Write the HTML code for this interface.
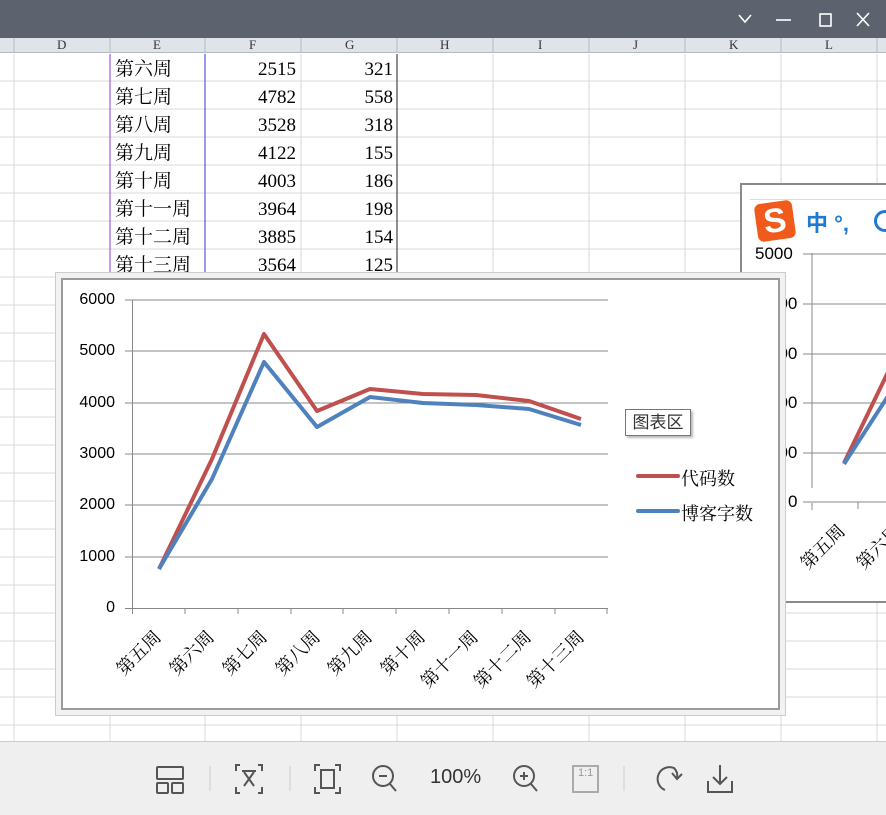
<!DOCTYPE html><html><head><meta charset="utf-8"><style>
*{margin:0;padding:0;box-sizing:border-box}
body{width:886px;height:815px;overflow:hidden;background:#fff;position:relative;font-family:"Liberation Serif","Noto Serif CJK SC",serif}
.abs{position:absolute}
.title{left:0;top:0;width:886px;height:38px;background:#5d636e}
.hdr{left:0;top:38px;width:886px;height:15px;background:#dfe3ea;border-bottom:1px solid #b5b9c0;font-size:13px;color:#333;line-height:13px;overflow:hidden}
.cell{font-size:19px;color:#000}
.sans{font-family:"Liberation Sans","Noto Sans CJK SC",sans-serif}
.lab{position:absolute;top:624px;width:90px;text-align:right;transform:rotate(-45deg);transform-origin:right top;font-size:18px}
</style></head><body>
<div class="abs title">
<svg class="abs" style="left:0;top:0" width="886" height="38" stroke="#fff" stroke-width="1.6" fill="none">
<path d="M739 15 L745 22 L751 15"/><path d="M776 20 H791"/><rect x="820" y="14" width="11" height="12"/><path d="M857 13 L869 26 M869 13 L857 26"/></svg></div>
<div class="abs hdr">
<span class="abs" style="left:57px;top:0">D</span><span class="abs" style="left:153px">E</span><span class="abs" style="left:249px">F</span><span class="abs" style="left:345px">G</span><span class="abs" style="left:440px">H</span><span class="abs" style="left:538px">I</span><span class="abs" style="left:633px">J</span><span class="abs" style="left:729px">K</span><span class="abs" style="left:825px">L</span>
<svg class="abs" style="left:0;top:0" width="886" height="15" stroke="#b5b9c0"><path d="M14 0V15M110 0V15M205 0V15M301 0V15M397 0V15M493 0V15M589 0V15M685 0V15M781 0V15M877 0V15"/></svg></div>
<svg class="abs" style="left:0;top:54px" width="886" height="690" stroke="#d9d9d9" stroke-width="1">
<path d="M0 27H886M0 55H886M0 83H886M0 111H886M0 139H886M0 167H886M0 195H886M0 223H886M0 251H886M0 279H886M0 307H886M0 335H886M0 363H886M0 391H886M0 419H886M0 447H886M0 475H886M0 503H886M0 531H886M0 559H886M0 587H886M0 615H886M0 643H886M0 671H886"/>
<path d="M14 0V690M493 0V690M589 0V690M685 0V690M781 0V690M877 0V690M205 0V690M301 0V690"/>
<path d="M110 0V220" stroke="#8a3fd0"/><path d="M205 0V220" stroke="#3333dd"/><path d="M397 0V220" stroke="#222"/><path d="M110 220V690M397 220V690"/>
</svg>
<div class="abs cell" style="left:115px;top:56px;line-height:28px">第六周<br>第七周<br>第八周<br>第九周<br>第十周<br>第十一周<br>第十二周<br>第十三周</div>
<div class="abs cell" style="left:205px;width:91px;text-align:right;top:56px;line-height:28px">2515<br>4782<br>3528<br>4122<br>4003<br>3964<br>3885<br>3564</div>
<div class="abs cell" style="left:301px;width:92px;text-align:right;top:56px;line-height:28px">321<br>558<br>318<br>155<br>186<br>198<br>154<br>125</div>

<!-- background chart -->
<div class="abs" style="left:740px;top:183px;width:150px;height:420px;background:#fff;border:2px solid #8a8a8a;overflow:hidden">
<svg class="abs" style="left:-2px;top:-2px" width="150" height="420">
<g stroke="#888"><path d="M72 70V305M72 320V327"/><path d="M63 71H150M63 121H150M63 171H150M63 220H150M63 270H150M63 319H150"/><path d="M63 319H150M118 319V326"/></g>
<path d="M104 280 L150 185" stroke="#c0504d" stroke-width="4"/><path d="M104 281 L150 210" stroke="#4f81bd" stroke-width="4"/>
</svg>
<div class="abs sans" style="left:13px;top:59px;font-size:17px">5000</div>
<div class="abs sans" style="left:27px;top:109px;font-size:17px">000</div>
<div class="abs sans" style="left:27px;top:159px;font-size:17px">000</div>
<div class="abs sans" style="left:27px;top:208px;font-size:17px">000</div>
<div class="abs sans" style="left:27px;top:258px;font-size:17px">000</div>
<div class="abs sans" style="left:46px;top:307px;font-size:17px">0</div>
<div class="abs" style="left:0px;top:333px;font-size:18px;transform:rotate(-45deg);transform-origin:right top;width:90px;text-align:right">第五周</div>
<div class="abs" style="left:56px;top:333px;font-size:18px;transform:rotate(-45deg);transform-origin:right top;width:90px;text-align:right">第六周</div>
</div>
<div class="abs" style="left:750px;top:199px;width:136px;height:42px;background:#fff;border-top:1px solid #ddd">
<div class="abs" style="left:6px;top:2px;width:38px;height:38px;background:#f05a1a;border-radius:6px;transform:rotate(-8deg);color:#fff;font:bold 34px/38px 'Liberation Sans',sans-serif;text-align:center">S</div>
<div class="abs sans" style="left:56px;top:6px;font-size:22px;color:#1f7ad1;font-weight:bold">中 °,</div>
<div class="abs" style="left:124px;top:10px;width:22px;height:22px;border:3px solid #1f7ad1;border-radius:50%"></div>
</div>

<!-- main chart -->
<div class="abs" style="left:55px;top:272px;width:731px;height:444px;background:#f2f2f2;border:1px solid #ccc"></div>
<div class="abs" style="left:61px;top:278px;width:719px;height:432px;background:#fff;border:2px solid #9a9a9a"></div>
<svg class="abs" style="left:0;top:0" width="886" height="815">
<g stroke="#888" stroke-width="1"><path d="M125 300H608M125 351H608M125 403H608M125 454H608M125 505H608M125 557H608"/><path d="M125 608.5H608M132.5 300V614"/>
<path d="M185 608V614M238 608V614M291 608V614M343 608V614M396 608V614M449 608V614M502 608V614M555 608V614M607 608V614"/></g>
<polyline fill="none" stroke="#c0504d" stroke-width="4" stroke-linejoin="round" points="159,569 212,459 264,334 317,411 370,389 423,394 476,395 529,401 581,419"/>
<polyline fill="none" stroke="#4f81bd" stroke-width="4" stroke-linejoin="round" points="159,569 212,479 264,362 317,427 370,397 423,403 476,405 529,409 581,425"/>
<path d="M638 476H678" stroke="#c0504d" stroke-width="4" stroke-linecap="round"/><path d="M638 511H678" stroke="#4f81bd" stroke-width="4" stroke-linecap="round"/>
</svg>
<div class="abs sans" style="left:60px;top:290px;width:55px;text-align:right;font-size:16px;line-height:20px">6000</div>
<div class="abs sans" style="left:60px;top:341px;width:55px;text-align:right;font-size:16px;line-height:20px">5000</div>
<div class="abs sans" style="left:60px;top:393px;width:55px;text-align:right;font-size:16px;line-height:20px">4000</div>
<div class="abs sans" style="left:60px;top:444px;width:55px;text-align:right;font-size:16px;line-height:20px">3000</div>
<div class="abs sans" style="left:60px;top:495px;width:55px;text-align:right;font-size:16px;line-height:20px">2000</div>
<div class="abs sans" style="left:60px;top:547px;width:55px;text-align:right;font-size:16px;line-height:20px">1000</div>
<div class="abs sans" style="left:60px;top:598px;width:55px;text-align:right;font-size:16px;line-height:20px">0</div>
<div class="lab" style="left:58px">第五周</div>
<div class="lab" style="left:111px">第六周</div>
<div class="lab" style="left:164px">第七周</div>
<div class="lab" style="left:217px">第八周</div>
<div class="lab" style="left:269px">第九周</div>
<div class="lab" style="left:322px">第十周</div>
<div class="lab" style="left:375px">第十一周</div>
<div class="lab" style="left:428px">第十二周</div>
<div class="lab" style="left:481px">第十三周</div>
<div class="abs" style="left:681px;top:465px;font-size:18px">代码数</div>
<div class="abs" style="left:681px;top:500px;font-size:18px">博客字数</div>
<div class="abs sans" style="left:625px;top:409px;width:66px;height:27px;border:1px solid #777;background:#fff;box-shadow:2px 2px 2px #bbb;font-size:17px;line-height:25px;text-align:center;color:#333">图表区</div>

<!-- toolbar -->
<div class="abs" style="left:0;top:741px;width:886px;height:74px;background:#efefef;border-top:1px solid #ccc"></div>
<svg class="abs" style="left:0;top:741px" width="886" height="74" fill="none" stroke="#555" stroke-width="2">
<rect x="157" y="26" width="26" height="12" rx="1"/><rect x="157" y="42" width="11" height="10" rx="1"/><rect x="172" y="42" width="11" height="10" rx="1"/>
<path d="M210 25V50M290 25V50M624 25V50" stroke="#ccc" stroke-width="1"/>
<path d="M240 24h-4v6M258 24h4v6M240 52h-4v-6M258 52h4v-6M242 30h14M244 31l10 14M254 31l-10 14"/>
<path d="M320 24h-5v6M335 24h5v6M320 52h-5v-6M335 52h5v-6"/><rect x="321" y="29" width="13" height="18"/>
<circle cx="383" cy="35" r="10"/><path d="M390 43l6 7M379 35h8"/>
<circle cx="524" cy="35" r="10"/><path d="M531 43l6 7M520 35h8M524 31v8"/>
<rect x="573" y="25" width="25" height="26" stroke="#aaa"/>
<path d="M665 49 A11 11 0 1 1 674 27 A11 11 0 0 1 677 37"/><path d="M672 32 l5 6 5 -5"/>
<path d="M720 24v19M713 36l7 7 7-7M708 40v11h24v-11"/>
</svg>
<div class="abs sans" style="left:578px;top:767px;font-size:11px;color:#999">1:1</div>
<div class="abs sans" style="left:430px;top:766px;font-size:20px;color:#333">100%</div>
</body></html>
